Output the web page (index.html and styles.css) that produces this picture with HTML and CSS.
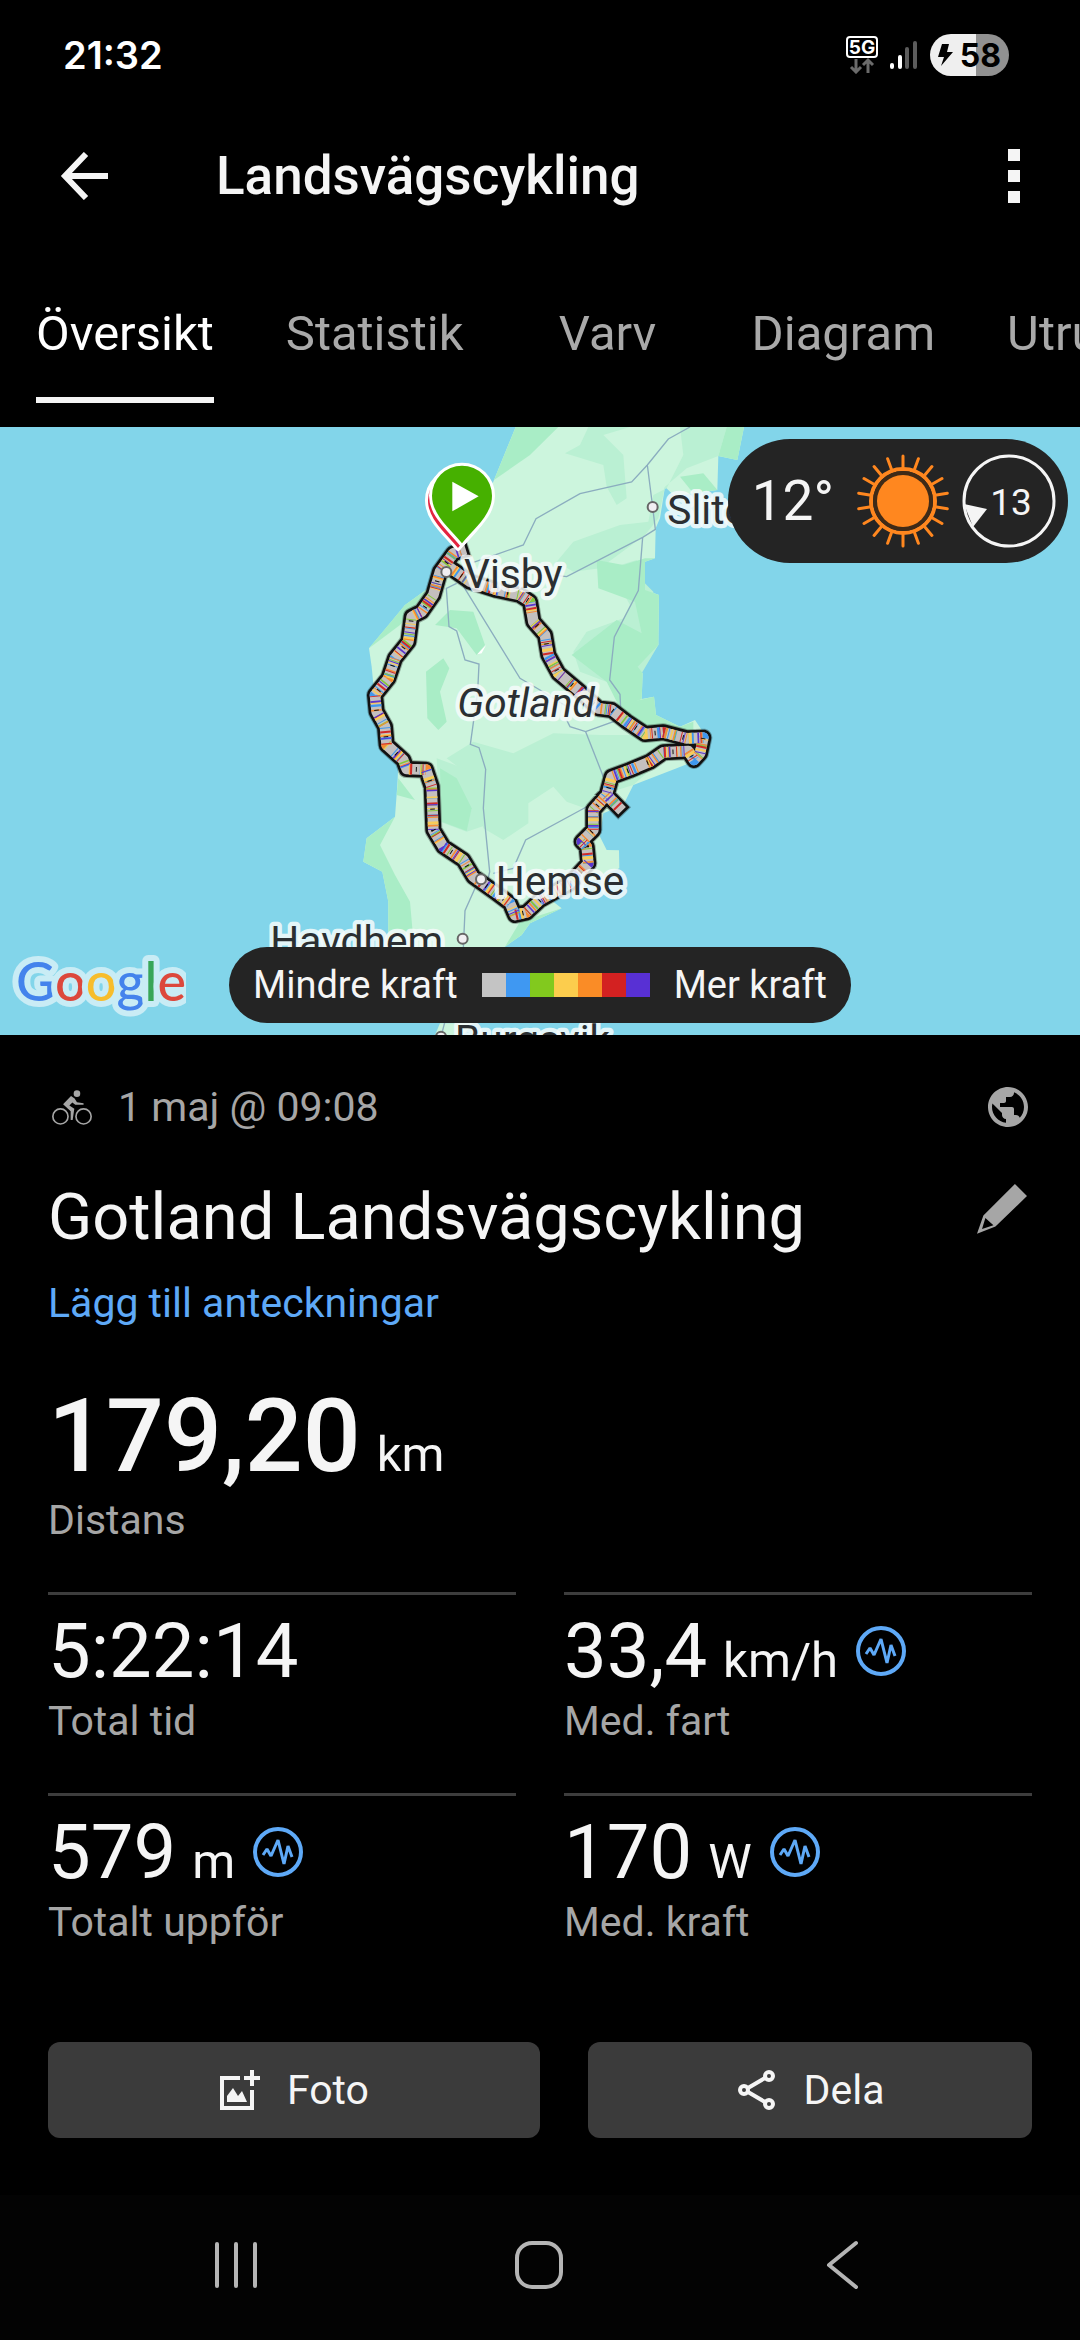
FILE: index.html
```html
<!DOCTYPE html>
<html lang="sv">
<head>
<meta charset="utf-8">
<meta name="viewport" content="width=device-width">
<title>Landsvägscykling</title>
<link rel="stylesheet" href="styles.css">
</head>
<body>
<svg class="defs" aria-hidden="true">
  <symbol id="pulse" viewBox="0 0 50 50">
    <circle cx="25" cy="25" r="23" fill="none" stroke="currentColor" stroke-width="4"/>
    <path d="M10 28 14 22l4 7 7-16 6 24 4-18 4 11" fill="none" stroke="currentColor" stroke-width="3" stroke-linejoin="bevel"/>
  </symbol>
</svg>

<div class="status-bar">
  <span class="clock">21:32</span>
  <div class="status-icons">
    <svg width="32" height="38" viewBox="0 0 32 38" fill="none" aria-hidden="true">
      <rect x="1" y="1" width="30" height="20" rx="3" stroke="#fff" stroke-width="2"/>
      <text class="net" x="16" y="18" text-anchor="middle">5G</text>
      <path d="M10 23v12M5 31l5 5 5-5M22 37V25M17 29l5-5 5 5" stroke="#6b6b6b" stroke-width="3"/>
    </svg>
    <svg width="28" height="30" viewBox="0 0 28 30" stroke-width="4" stroke-linecap="round" aria-hidden="true">
      <path d="M2 25v2M10 17v10" stroke="#fff"/>
      <path d="M17 9v18M25 3v24" stroke="#5c5c5c"/>
    </svg>
    <div class="battery">
      <svg width="15" height="22" viewBox="0 0 15 22" aria-hidden="true"><path d="M4 0h7L9 8h6L3 22 6 13H0z"/></svg>
      <span>58</span>
    </div>
  </div>
</div>

<header class="app-bar">
  <button class="icon-button" type="button" aria-label="Tillbaka">
    <svg width="48" height="48" viewBox="0 0 48 48" fill="none" stroke="currentColor" stroke-width="6" aria-hidden="true"><path d="M48 24H5M26 2 5 24l21 22"/></svg>
  </button>
  <h1>Landsvägscykling</h1>
  <button class="icon-button" type="button" aria-label="Fler alternativ">
    <svg width="12" height="54" viewBox="0 0 12 54" fill="currentColor" aria-hidden="true"><path d="M0 0h12v12H0zM0 21h12v12H0zM0 42h12v12H0z"/></svg>
  </button>
</header>

<nav class="tabs">
  <a class="tab active" href="#oversikt" aria-current="page"><span>Översikt</span></a>
  <a class="tab" href="#statistik"><span>Statistik</span></a>
  <a class="tab" href="#varv"><span>Varv</span></a>
  <a class="tab" href="#diagram"><span>Diagram</span></a>
  <a class="tab" href="#utrustning"><span>Utrustning</span></a>
</nav>

<section class="map" aria-label="Karta">
  <svg class="map-canvas" viewBox="-1020 6 3240 1824" preserveAspectRatio="xMidYMid slice">
    <defs>
      <path id="route" d="M362 378 340 385 300 440 280 510 245 560 215 575 205 650 165 700 145 760 105 810 110 860 135 905 140 960 190 1005 200 1032 258 1034 275 1085 280 1215 310 1265 370 1305 400 1355 470 1405 510 1435 525 1470 560 1462 600 1425 690 1375 745 1315 740 1265 725 1250 760 1215 760 1155 800 1110 815 1055 870 1035 930 1010 970 982 1045 978 1062 1005 1080 985 1090 938 1040 940 970 922 915 927 860 890 815 855 775 850 720 800 655 745 625 690 615 630 580 590 570 530 540 510 470 495 390 470 340 435M800 1110 835 1146"/>
      <path id="pin" d="M366 355C330 310 276 270 276 212A90 90 0 0 1 456 212C456 270 402 310 366 355Z"/>
    </defs>
    <path fill="#ccf5dd" d="M527 6 462 165 400 320 340 390 300 440 265 490 195 540 150 595 87 670 95 725 105 830 150 960 175 1020 172 1080 165 1175 80 1240 70 1310 127 1340 145 1430 145 1620H440L495 1565 545 1530 570 1495 665 1450 640 1430 720 1380 838 1330 837 1276 800 1275 780 1235 790 1165 850 1140 880 1080 1010 1030 1060 1010 1085 960 1085 915 1065 885 1020 905 948 870 942 815 905 822 908 745 893 725 955 660 957 510 915 495 915 410 945 400 947 310 960 280 975 185 1005 215 1060 205 1132 195 1135 93 1192 105 1212 6Z"/>
    <g fill="#baf0d3">
      <path d="M745 6 720 60 675 85 790 120 800 185 830 240 860 220 850 90 790 30 870 6Z"/>
      <path d="M1020 6 1030 90 980 190 940 210 925 290 840 300 700 350 650 410 700 440 780 430 915 330 955 280 975 185 1040 130 1135 93 1160 6Z"/>
      <path d="M810 430 870 540 850 580 740 620 700 680 720 740 850 790 905 745 955 660 940 500 900 460 890 405Z"/>
      <path d="M320 1000 400 950 520 985 640 925 780 930 900 930 1010 965 880 1080 800 1105 735 1150 680 1130 640 1085 565 1135V1195L490 1245 430 1210 400 1060Z"/>
      <path d="M290 1000 400 1040 440 1200 380 1220 300 1190Z"/>
    </g>
    <g fill="#a9edc6">
      <path d="M527 6H655L570 90 462 165Z"/>
      <path d="M770 405 850 420 915 400 945 400 915 410 915 495 957 510 955 660 893 725 908 745 905 822 840 850 800 770 695 690 830 585 905 625 885 530 775 490Z"/>
      <path d="M1135 93 1160 6H1212L1192 105Z"/>
      <path d="M1020 155 1090 145 1132 195 1060 205Z"/>
      <path d="M830 840 942 815 948 870 1020 905 1060 890 1060 930 930 910Z"/>
      <path d="M285 600 330 555 400 560 435 660 410 690 350 610Z"/>
      <path d="M258 740 310 700 328 730 300 800 320 890 295 915 262 880Z"/>
      <path d="M300 1030 350 1060 395 1150 380 1218 305 1190Z"/>
      <path d="M175 1060 225 1125 170 1110Z"/>
      <path d="M165 1175 120 1260 165 1350 210 1430 225 1600H145V1430L127 1340 70 1310 80 1240Z"/>
      <path d="M495 1565 540 1490 665 1450 570 1495 545 1530Z"/>
      <path d="M87 670 195 540 265 490 180 600Z"/>
    </g>
    <path fill="#fff" d="M412 688 438 660 425 685Z"/>
    <path fill="#ccf5dd" d="M300 1795 400 1795 370 1830H285Z"/>
    <g fill="none" stroke="#8badbf" stroke-width="4">
      <path d="M1050 6 985 42 922 120 875 171 720 206 588 281 550 360 470 388 400 412"/>
      <path d="M922 120 938 246 946 313 908 337 680 455 640 450"/>
      <path d="M908 337 895 497 823 636 809 765 840 808 842 850 820 890 737 920 690 905 680 885"/>
      <path d="M365 475 540 760 600 795 690 850"/>
      <path d="M350 475 319 490 327 605 350 618 375 705 417 717 413 800 391 958 417 968 437 1033 430 1150 449 1340 440 1380"/>
      <path d="M737 920 790 1055"/>
      <path d="M750 1140 557 1245 520 1330 460 1345"/>
      <path d="M405 1390 375 1457 370 1570 320 1770 303 1835"/>
    </g>
    <g fill="none" stroke-linejoin="round">
      <use href="#route" stroke="#000" stroke-width="54" stroke-linecap="square" opacity=".3"/>
      <use href="#route" stroke="#111" stroke-width="48" stroke-linecap="square"/>
      <g stroke-width="32">
        <use href="#route" stroke="#c4c0bf" stroke-linecap="square"/>
        <use href="#route" stroke="#3f97ee" stroke-dasharray="3 26 7 47 3 19"/>
        <use href="#route" stroke="#85c83a" stroke-dasharray="3 41 3 24 5 63" stroke-dashoffset="12"/>
        <use href="#route" stroke="#f8cc58" stroke-dasharray="5 29 3 38 9 51" stroke-dashoffset="25"/>
        <use href="#route" stroke="#f68b33" stroke-dasharray="3 33 4 21 5 43" stroke-dashoffset="37"/>
        <use href="#route" stroke="#cf2a2a" stroke-dasharray="3 49 6 31 3 57" stroke-dashoffset="8"/>
        <use href="#route" stroke="#5a35cf" stroke-dasharray="3 57 5 39 3 71" stroke-dashoffset="51"/>
        <use href="#route" stroke="#111" stroke-width="14" stroke-dasharray="3 83 3 61" stroke-dashoffset="30"/>
      </g>
    </g>
    <g fill="#f1eff2" stroke="#666" stroke-width="6">
      <circle cx="938" cy="246" r="15"/><circle cx="319" cy="441" r="15"/><circle cx="423" cy="1363" r="15"/><circle cx="368" cy="1541" r="15"/><circle cx="303" cy="1835" r="15"/>
    </g>
    <g class="place">
      <text x="372" y="490">Visby</text>
      <text x="982" y="297">Slite</text>
      <text class="island" x="352" y="877">Gotland</text>
      <text x="467" y="1410">Hemse</text>
      <text x="-209" y="1590">Havdhem</text>
      <text x="345" y="1887">Burgsvik</text>
    </g>
    <g stroke="#fff" stroke-width="18" stroke-linejoin="round" paint-order="stroke">
      <use href="#pin" x="-12" y="14" fill="#e32440"/>
      <use href="#pin" fill="#46b000"/>
    </g>
    <path fill="#fff" d="M337 170 416 214 337 259Z"/>
  </svg>

  <svg class="google" width="180" height="72" viewBox="0 0 180 72">
    <text x="10" y="50"><tspan fill="#4483ec">G</tspan><tspan fill="#dc483c">o</tspan><tspan fill="#f7bd2c">o</tspan><tspan fill="#4483ec">g</tspan><tspan fill="#38a658">l</tspan><tspan fill="#dc483c">e</tspan></text>
  </svg>

  <div class="weather">
    <span class="temperature">12°</span>
    <svg width="94" height="94" viewBox="-47 -47 94 94" aria-label="Soligt">
      <g fill="none" stroke="#ff871f">
        <circle r="32" stroke-width="4"/>
        <path id="rays" stroke-width="3" stroke-linecap="round" d="M0-34V-45M0 34V45"/>
        <g stroke-width="3" stroke-linecap="round">
          <use href="#rays" transform="rotate(20)"/><use href="#rays" transform="rotate(40)"/><use href="#rays" transform="rotate(60)"/><use href="#rays" transform="rotate(80)"/><use href="#rays" transform="rotate(100)"/><use href="#rays" transform="rotate(120)"/><use href="#rays" transform="rotate(140)"/><use href="#rays" transform="rotate(160)"/>
        </g>
      </g>
      <circle r="30" fill="#3f2a17"/>
      <circle r="26" fill="#ff871f"/>
    </svg>
    <svg width="94" height="94" viewBox="-47 -47 94 94">
      <circle r="45" fill="none" stroke="#f5f5f5" stroke-width="3"/>
      <path fill="#f5f5f5" d="M-45 3-22 8-36 26Z"/>
      <text class="wind" x="2" y="14" text-anchor="middle">13</text>
    </svg>
  </div>

  <div class="legend">
    <span>Mindre kraft</span>
    <div class="scale"><i class="c1"></i><i class="c2"></i><i class="c3"></i><i class="c4"></i><i class="c5"></i><i class="c6"></i><i class="c7"></i></div>
    <span>Mer kraft</span>
  </div>
</section>

<main class="details">
  <div class="meta">
    <svg width="40" height="35" viewBox="36 56 120 106" fill="currentColor" aria-hidden="true">
      <g fill="none" stroke="currentColor" stroke-width="5"><circle cx="61" cy="136" r="23"/><circle cx="131" cy="136" r="23"/></g>
      <circle cx="111" cy="67" r="10"/>
      <path d="M69 99 93 74 104 82 111 93 131 96V101H106L97 94 88 103 103 113 98 147H92L92 120Z"/>
    </svg>
    <span class="date">1 maj @ 09:08</span>
    <svg width="40" height="40" viewBox="2 2 20 20" fill="currentColor" aria-label="Offentlig"><path d="M12 2C6.48 2 2 6.48 2 12s4.48 10 10 10 10-4.48 10-10S17.52 2 12 2zm-1 17.93c-3.95-.49-7-3.85-7-7.93 0-.62.08-1.21.21-1.79L9 15v1c0 1.1.9 2 2 2v1.93zm6.9-2.54c-.26-.81-1-1.39-1.9-1.39h-1v-3c0-.55-.45-1-1-1H8v-2h2c.55 0 1-.45 1-1V7h2c1.1 0 2-.9 2-2v-.41c2.93 1.19 5 4.06 5 7.41 0 2.08-.8 3.97-2.1 5.39z"/></svg>
  </div>
  <div class="name">
    <h2>Gotland Landsvägscykling</h2>
    <button class="edit" type="button" aria-label="Redigera namn">
      <svg width="50" height="50" viewBox="81 343 149 149" fill="currentColor" fill-rule="evenodd" aria-hidden="true"><path d="M194 343 230 379 136 470 81 491 100 437ZM106 444 96 477 130 466Z"/></svg>
    </button>
  </div>
  <a class="notes" href="#anteckningar">Lägg till anteckningar</a>

  <div class="stat total">
    <p class="value"><span>179,20<small>km</small></span></p>
    <p class="label">Distans</p>
  </div>
  <div class="stats">
    <div class="stat">
      <p class="value"><span>5:22:14</span></p>
      <p class="label">Total tid</p>
    </div>
    <div class="stat">
      <p class="value"><span>33,4<small>km/h</small></span><svg width="50" height="50" aria-hidden="true"><use href="#pulse"/></svg></p>
      <p class="label">Med. fart</p>
    </div>
    <div class="stat">
      <p class="value"><span>579<small>m</small></span><svg width="50" height="50" aria-hidden="true"><use href="#pulse"/></svg></p>
      <p class="label">Totalt uppför</p>
    </div>
    <div class="stat">
      <p class="value"><span>170<small>W</small></span><svg width="50" height="50" aria-hidden="true"><use href="#pulse"/></svg></p>
      <p class="label">Med. kraft</p>
    </div>
  </div>

  <div class="actions">
    <button type="button">
      <svg width="42" height="42" viewBox="0 0 42 42" aria-hidden="true">
        <path d="M21 9H3V39H33V21M33 1V17M25 9H41" fill="none" stroke="currentColor" stroke-width="4"/>
        <path d="M8 33V27L14 19 19 27 23 22 28 33Z" fill="currentColor"/>
      </svg>
      Foto
    </button>
    <button type="button">
      <svg width="42" height="42" viewBox="0 0 42 42" fill="none" stroke="currentColor" stroke-width="4" aria-hidden="true">
        <circle cx="33" cy="7" r="4"/><circle cx="8" cy="21" r="4"/><circle cx="33" cy="35" r="4"/><path d="M12 19 29 9M12 23 29 33"/>
      </svg>
      Dela
    </button>
  </div>
</main>

<footer class="system-nav">
  <button type="button" aria-label="Senaste appar">
    <svg width="50" height="50" viewBox="0 0 50 50" stroke="currentColor" stroke-width="4" stroke-linecap="round" aria-hidden="true"><path d="M6 4V46M25 4V46M44 4V46"/></svg>
  </button>
  <button type="button" aria-label="Hem">
    <svg width="50" height="50" viewBox="0 0 50 50" fill="none" stroke="currentColor" stroke-width="4" aria-hidden="true"><rect x="3" y="3" width="44" height="44" rx="15"/></svg>
  </button>
  <button type="button" aria-label="Bakåt">
    <svg width="50" height="50" viewBox="0 0 50 50" fill="none" stroke="currentColor" stroke-width="4" stroke-linecap="round" stroke-linejoin="round" aria-hidden="true"><path d="M39 3 12 25 39 47"/></svg>
  </button>
</footer>
</body>
</html>
```
FILE: styles.css
```css
* {
  box-sizing: border-box;
}

body {
  margin: 0;
  min-height: 100vh;
  display: flex;
  flex-direction: column;
  background: #000;
  color: #f5f5f5;
  font-family: Roboto, "Noto Sans", sans-serif;
  overflow-x: hidden;
}

h1,
h2,
p {
  margin: 0;
  font-weight: 400;
}

svg {
  display: block;
  flex: none;
}

button {
  margin: 0;
  padding: 0;
  border: 0;
  background: none;
  color: inherit;
  font: inherit;
  cursor: pointer;
}

.defs {
  position: absolute;
  width: 0;
  height: 0;
}

/* Status bar */
.status-bar {
  display: flex;
  align-items: center;
  justify-content: space-between;
  height: 110px;
  padding: 0 71px 0 63px;
  color: #fff;
  font-family: Inter, sans-serif;
}

.clock {
  font-size: 38px;
  font-weight: 600;
}

.status-icons {
  display: flex;
  align-items: center;
  gap: 12px;
}

.net {
  fill: #fff;
  font-size: 19px;
  font-weight: 700;
}

.battery {
  display: flex;
  align-items: center;
  justify-content: center;
  gap: 7px;
  width: 79px;
  height: 42px;
  border-radius: 21px;
  background: linear-gradient(to right, #efefef 58%, #919191 58%);
  color: #000;
  font-size: 32px;
  font-weight: 700;
}

/* App bar */
.app-bar {
  display: flex;
  align-items: center;
  height: 132px;
  padding: 0 60px;
}

.app-bar h1 {
  flex: 1;
  padding-left: 108px;
  font-size: 53px;
  font-weight: 500;
}

/* Tabs */
.tabs {
  display: flex;
  overflow: hidden;
}

.tab {
  flex: none;
  display: flex;
  justify-content: center;
  min-width: 216px;
  padding: 62px 36px 24px;
  color: #a9a9a9;
  font-size: 49px;
  line-height: 60px;
  text-decoration: none;
}

.tab span {
  padding-bottom: 33px;
  border-bottom: 6px solid transparent;
}

.tab.active {
  color: #fff;
}

.tab.active span {
  border-color: #f5f5f5;
}

/* Map */
.map {
  position: relative;
  height: 608px;
  background: #82d5ea;
  overflow: hidden;
}

.map-canvas {
  width: 100%;
  height: 100%;
}

.place {
  fill: #2b2f32;
  stroke: #f6fbfb;
  stroke-opacity: .85;
  stroke-width: 26px;
  stroke-linejoin: round;
  paint-order: stroke;
  font-size: 122px;
}

.island {
  font-style: italic;
}

.google {
  position: absolute;
  left: 6px;
  bottom: 12px;
  stroke: #c9ecf5;
  stroke-width: 12px;
  stroke-linejoin: round;
  paint-order: stroke;
  font-family: Lato, sans-serif;
  font-size: 54px;
  font-weight: 500;
}

.weather {
  position: absolute;
  top: 12px;
  right: 12px;
  display: flex;
  align-items: center;
  gap: 12px;
  height: 124px;
  padding: 0 12px 0 24px;
  border-radius: 62px;
  background: #242424;
}

.temperature {
  padding-right: 10px;
  font-size: 55px;
}

.wind {
  fill: #f5f5f5;
  font-size: 37px;
}

.legend {
  position: absolute;
  bottom: 12px;
  left: 50%;
  transform: translateX(-50%);
  display: flex;
  align-items: center;
  gap: 24px;
  height: 76px;
  padding: 0 24px;
  border-radius: 38px;
  background: #242424;
  font-size: 38px;
  white-space: nowrap;
}

.scale {
  display: flex;
}

.scale i {
  width: 24px;
  height: 24px;
}

.c1 { background: #c4c4c4; }
.c2 { background: #3f98f2; }
.c3 { background: #82c91e; }
.c4 { background: #fccd4d; }
.c5 { background: #fa8c26; }
.c6 { background: #d32121; }
.c7 { background: #5830d4; }

/* Details */
.details {
  flex: 1;
  padding: 42px 48px 57px;
}

.meta {
  display: flex;
  align-items: center;
  height: 60px;
  padding: 0 4px;
  color: #a6a6a6;
}

.date {
  flex: 1;
  padding-left: 26px;
  font-size: 41px;
}

.name {
  display: flex;
  justify-content: space-between;
  margin-top: 38px;
}

.name h2 {
  font-size: 65px;
  line-height: 84px;
}

.edit {
  height: 68px;
  padding: 0 5px;
  color: #a6a6a6;
}

.notes {
  display: block;
  width: max-content;
  margin-top: 16px;
  color: #5ea9f7;
  font-size: 41px;
  line-height: 56px;
  text-decoration: none;
}

.value {
  display: flex;
  align-items: center;
  gap: 18px;
  height: 92px;
  font-size: 76px;
  line-height: 92px;
}

.value svg {
  color: #5ea9f7;
}

.value small {
  margin-left: 16px;
  font-size: 49px;
  font-weight: 400;
  line-height: 1;
}

.label {
  color: #a6a6a6;
  font-size: 41px;
  line-height: 48px;
}

.total {
  margin-top: 45px;
}

.total .value {
  height: 120px;
  font-size: 102px;
  font-weight: 500;
  line-height: 120px;
}

.stats {
  display: grid;
  grid-template-columns: 1fr 1fr;
  gap: 48px;
  margin-top: 48px;
}

.stats .stat {
  padding-top: 10px;
  border-top: 3px solid #3d3d3d;
}

.actions {
  display: grid;
  grid-template-columns: 41fr 37fr;
  gap: 48px;
  margin-top: 96px;
}

.actions button {
  display: flex;
  align-items: center;
  justify-content: center;
  gap: 26px;
  height: 96px;
  border-radius: 12px;
  background: #3b3b3b;
  font-size: 41px;
}

/* System navigation */
.system-nav {
  display: grid;
  grid-template-columns: repeat(3, 1fr);
  justify-items: center;
  padding: 45px 86px 50px 84px;
  background: #030303;
  color: #b5b5b5;
}
```
